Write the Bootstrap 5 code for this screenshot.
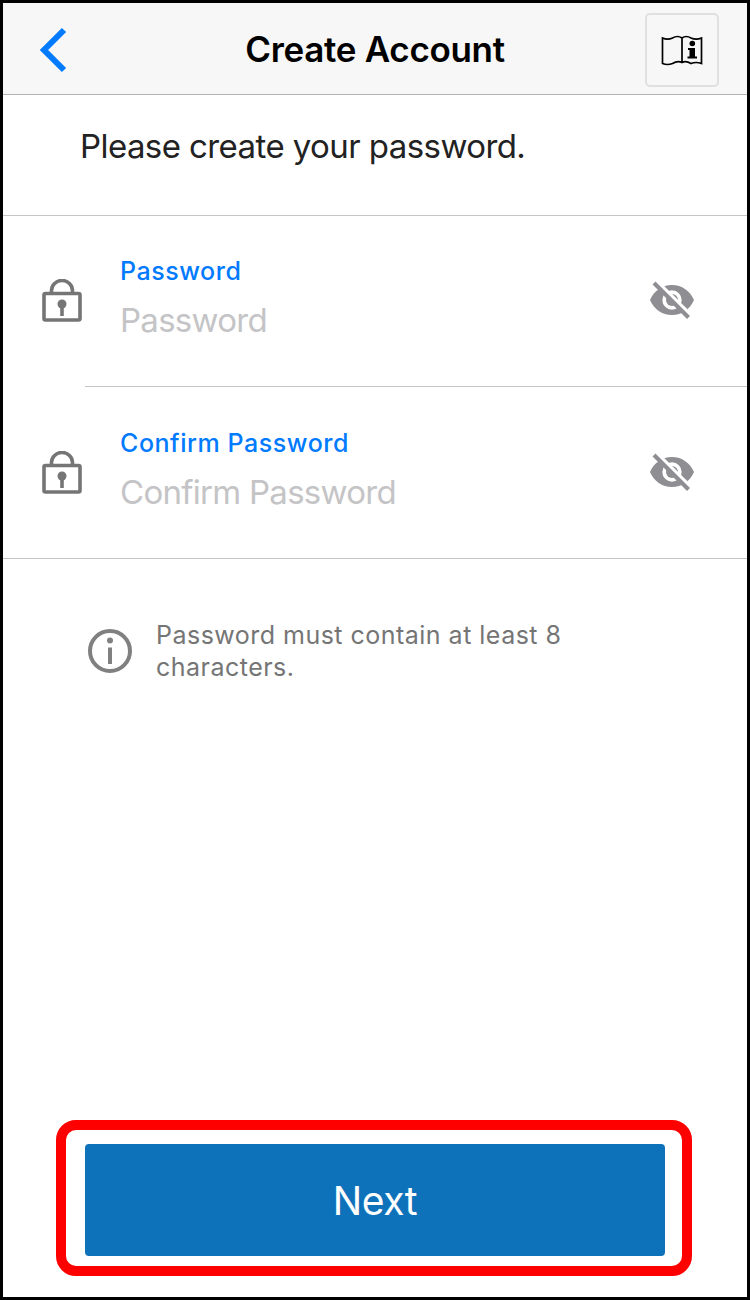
<!DOCTYPE html>
<html lang="en">
<head>
<meta charset="utf-8">
<meta name="viewport" content="width=device-width, initial-scale=1">
<title>Create Account</title>
<link rel="stylesheet" href="https://cdn.jsdelivr.net/npm/bootstrap@5.3.0/dist/css/bootstrap.min.css">
<style>
body{font-family:Inter,"Liberation Sans",sans-serif;color:#222;background:#fff}
svg{display:block;flex:none}
.screen{height:1300px;border:3px solid #000}
.top-bar{height:92px;background:#f7f7f7;border-bottom:1px solid #b2b2b2;padding:2px 28px 0 34px;display:grid;grid-template-columns:69px 1fr 74px}
.title{font-size:35px;line-height:44px;font-weight:600;color:#000;letter-spacing:-.3px;padding:0 1px 2px 0}
.guide{width:74px;height:74px;border:2px solid #e0e0e0;border-radius:5px;background:none;color:#000}
.prompt{height:121px;padding:30px 0 0 77px;font-size:33px;line-height:42px;letter-spacing:-.58px;border-bottom:1px solid #c4c4c6}
.field-row{height:171px;padding-left:39px}
.field-row + .field-row{height:172px}
.field-icon{width:43px;padding-top:63px}
.field-main{padding:38px 52px 0 35px}
.field-row + .field-row .field-main{padding-top:39px}
.field-row + .field-row .field-icon{padding-top:64px}
.divided{border-bottom:1px solid #c4c4c6}
.field-label{font-size:25px;line-height:34px;font-weight:500;letter-spacing:.55px;color:#007aff}
.field-hint{font-size:33px;line-height:42px;letter-spacing:-.72px;color:#c4c4c6;margin-top:11px}
.eye{margin-top:25px}
.note{padding:60px 84px 0;gap:23px;font-size:25px;line-height:32px;letter-spacing:.48px;color:#757575}
.callout-frame{width:636px;height:156px;border:10px solid #f00;border-radius:20px;margin:0 0 21px 53px;padding:14px 17px 10px 19px}
.btn-next{--bs-btn-color:#fff;--bs-btn-bg:#0e72ba;--bs-btn-hover-color:#fff;--bs-btn-hover-bg:#0c65a6;--bs-btn-border-width:0;height:112px;border-radius:4px;font-size:39px;letter-spacing:-.4px;padding-top:8px}
</style>
</head>
<body>
<div class="screen d-flex flex-column">
  <header class="top-bar align-items-center">
    <a href="#" aria-label="Back"><svg width="32" height="46" viewBox="0 0 32 46"><path d="M27 3 7 23l20 20" fill="none" stroke="#007aff" stroke-width="6"/></svg></a>
    <h1 class="title m-0 text-center">Create Account</h1>
    <button class="guide p-0 d-flex align-items-center justify-content-center" aria-label="Guide">
      <svg width="42" height="32" viewBox="0 0 42 32"><path d="M1.500 4q5 2.300 10 0 5-3 9.500 0 4-3 9 0 5 2.300 10.500 0v25.500q-5.500-2-10.500 0-5-3-9-1-4.500-2-9.500 1-5 2-10 0zM21 4v24.500" fill="none" stroke="currentColor" stroke-width="1.700"/><circle cx="31.300" cy="9.500" r="2.800"/><path d="M27 14h7v8.500h2v2h-9.500v-2h2v-6.500H27z"/></svg>
    </button>
  </header>
  <p class="prompt m-0">Please create your password.</p>
  <main class="flex-grow-1 d-flex flex-column">
    <section class="field-row d-flex">
      <div class="field-icon"><svg width="40" height="44" viewBox="0 0 40 44"><use href="#lock"/></svg></div>
      <div class="field-main divided flex-grow-1 d-flex justify-content-between">
        <div><div class="field-label">Password</div><div class="field-hint">Password</div></div>
        <svg class="eye" width="46" height="42" viewBox="0 0 46 42"><use href="#eye-off"/></svg>
      </div>
    </section>
    <section class="field-row divided d-flex">
      <div class="field-icon"><svg width="40" height="44" viewBox="0 0 40 44"><use href="#lock"/></svg></div>
      <div class="field-main flex-grow-1 d-flex justify-content-between">
        <div><div class="field-label">Confirm Password</div><div class="field-hint">Confirm Password</div></div>
        <svg class="eye" width="46" height="42" viewBox="0 0 46 42"><use href="#eye-off"/></svg>
      </div>
    </section>
    <div class="note d-flex align-items-center">
      <svg width="46" height="46" viewBox="0 0 46 46"><circle cx="23" cy="23" r="20" fill="none" stroke="#808080" stroke-width="4"/><circle cx="23" cy="12.500" r="3" fill="#808080"/><path d="M23 19.500v16.500" stroke="#808080" stroke-width="4"/></svg>
      <div>Password must contain at least 8<br>characters.</div>
    </div>
    <div class="callout-frame mt-auto"><button class="btn btn-next w-100">Next</button></div>
  </main>
</div>
<svg width="0" height="0" class="position-absolute" aria-hidden="true">
  <symbol id="lock" viewBox="0 0 40 44"><g fill="none" stroke="#757575" stroke-width="3.600"><rect x="2" y="14.500" width="36" height="26.500" rx="1.500"/><path d="M9.500 14v-2.500a10.500 10 0 0 1 21 0V14"/><path d="M20 25v12"/></g><circle cx="20" cy="25" r="4.500" fill="#757575"/></symbol>
  <symbol id="eye-off" viewBox="0 0 46 42">
    <path fill="#8e8e93" fill-rule="evenodd" d="M1 21C5 12 13 6 23 6S41 12 45 21C41 30 33 36 23 36S5 30 1 21zm22-9.700a9.700 9.700 0 1 0 0 19.400 9.700 9.700 0 0 0 0-19.400z"/>
    <circle cx="23" cy="21" r="6" fill="#8e8e93"/>
    <path d="M6.500.8 43 37.300" stroke="#fff" stroke-width="3.500"/><path d="M5 4 39.500 38.500" stroke="#8e8e93" stroke-width="4"/>
  </symbol>
</svg>
<script src="https://cdn.jsdelivr.net/npm/bootstrap@5.3.0/dist/js/bootstrap.bundle.min.js"></script>
</body>
</html>
